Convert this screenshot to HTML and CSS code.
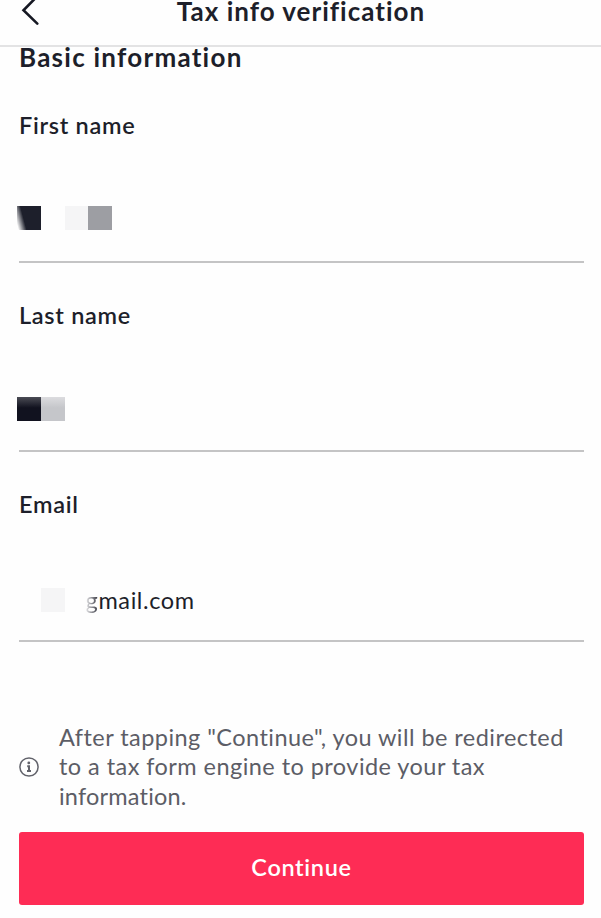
FILE: index.html
```html
<!DOCTYPE html>
<html lang="en">
<head>
    <meta charset="UTF-8">
    <meta name="viewport" content="width=device-width, initial-scale=1.0">
    <title>Tax info verification</title>
    <link rel="stylesheet" href="styles.css">
</head>
<body>
    <header class="header">
        <button class="back-button" type="button" aria-label="Back">
            <svg width="20" height="34" viewBox="0 0 20 34" fill="none" stroke="#161823" stroke-width="2.6" stroke-linecap="round">
                <path d="M17 4.5 L3.5 18.3 L17.3 31.6"/>
            </svg>
        </button>
        <h1 class="header-title">Tax info verification</h1>
    </header>
    <main class="container">
        <h2 class="section-title">Basic information</h2>
        <div class="field">
            <div class="field-label">First name</div>
            <div class="field-value">
                <span class="mask mask-dark mask-slant"></span>
                <span class="mask"></span>
                <span class="mask mask-light"></span>
                <span class="mask mask-gray"></span>
            </div>
        </div>
        <div class="field">
            <div class="field-label">Last name</div>
            <div class="field-value field-value-last">
                <span class="mask mask-dark mask-fade"></span>
                <span class="mask mask-silver"></span>
            </div>
        </div>
        <div class="field">
            <div class="field-label">Email</div>
            <div class="field-value field-value-email">
                <span class="mask"></span>
                <span class="mask mask-light"></span>
                <span class="email"><span class="email-faded">g</span>mail.com</span>
            </div>
        </div>
        <div class="notice">
            <svg class="notice-icon" width="20" height="20" viewBox="0 0 20 20" fill="none" stroke="#62636b">
                <circle cx="10" cy="10" r="9.1" stroke-width="1.5"/>
                <circle cx="9.8" cy="5.9" r="1.4" fill="#62636b" stroke="none"/>
                <path d="M8.2 9.2 H10 V14 M8 14 H12" stroke-width="2"/>
            </svg>
            <p class="notice-text">
                <span class="notice-line">After tapping "Continue", you will be redirected</span>
                <span class="notice-line">to a tax form engine to provide your tax</span>
                <span class="notice-line notice-line-last">information.</span>
            </p>
        </div>
        <button class="continue-button" type="button">Continue</button>
    </main>
</body>
</html>
```
FILE: styles.css
```css
* {
    box-sizing: border-box;
}
body {
    margin: 0;
    height: 918px;
    overflow: hidden;
    background-color: #fefefe;
    color: #1d1f2a;
    font-family: Lato, "Liberation Sans", sans-serif;
}
button {
    border: none;
    padding: 0;
    background: none;
    font-family: inherit;
}
.header {
    display: grid;
    grid-template-columns: 60px 1fr 60px;
    height: 47px;
    border-bottom: 2px solid #e3e3e4;
}
.back-button {
    width: 20px;
    height: 34px;
    margin: -8px 0 0 20px;
}
.back-button svg {
    display: block;
}
.header-title {
    margin: 0 0 0 1px;
    font-size: 26px;
    line-height: 22px;
    font-weight: 700;
    letter-spacing: 1px;
    text-align: center;
    white-space: nowrap;
}
.container {
    padding: 0 17px 0 19px;
}
.section-title {
    margin: -5px 0 0;
    height: 31px;
    font-size: 26px;
    line-height: 30px;
    font-weight: 700;
    letter-spacing: 1.25px;
}
.field {
    height: 189.5px;
    padding-top: 37px;
    border-bottom: 2px solid #c4c4c5;
}
.field-label {
    height: 32px;
    font-size: 23.5px;
    line-height: 30px;
    font-weight: 600;
    letter-spacing: 0.7px;
}
.field-value {
    display: flex;
    margin: 64px 0 0 -2px;
}
.field-value-last {
    margin-top: 65.5px;
}
.field-value-email {
    margin-top: 67px;
}
/* censored blocks */
.mask {
    width: 23.8px;
    height: 24px;
}
.mask-dark {
    background-color: #1d1f2b;
}
.mask-slant {
    background-image: linear-gradient(75deg, #fefefe 5%, #1d1f2b 32%);
}
.mask-fade {
    background-image: linear-gradient(#4b4c55, #11121f 45%);
}
.mask-light {
    background-color: #f5f5f6;
}
.mask-gray {
    background-color: #9d9ea3;
}
.mask-silver {
    background-image: linear-gradient(#dcdcdf, #c5c6ca 45%);
}
.email {
    margin-left: 21px;
    font-size: 23.5px;
    line-height: 24px;
    letter-spacing: 0.6px;
}
.email-faded {
    color: transparent;
    background: linear-gradient(90deg, #e8e8ea, #33343e);
    background-clip: text;
    -webkit-background-clip: text;
}
.notice {
    display: flex;
    align-items: center;
    margin-top: 81px;
    color: #5c5d66;
}
.notice-icon {
    flex: none;
}
.notice-text {
    margin: 0 0 0 20px;
    font-size: 23.5px;
    line-height: 29.7px;
}
.notice-line {
    display: block;
    white-space: nowrap;
    letter-spacing: 0.45px;
}
.notice-line-last {
    letter-spacing: 0.2px;
}
.continue-button {
    display: block;
    width: 100%;
    height: 72.5px;
    margin-top: 20.4px;
    padding-bottom: 2px;
    border-radius: 3px;
    background-color: #fe2c55;
    color: #fff;
    font-size: 23.5px;
    font-weight: 600;
    letter-spacing: 0.65px;
}
```
